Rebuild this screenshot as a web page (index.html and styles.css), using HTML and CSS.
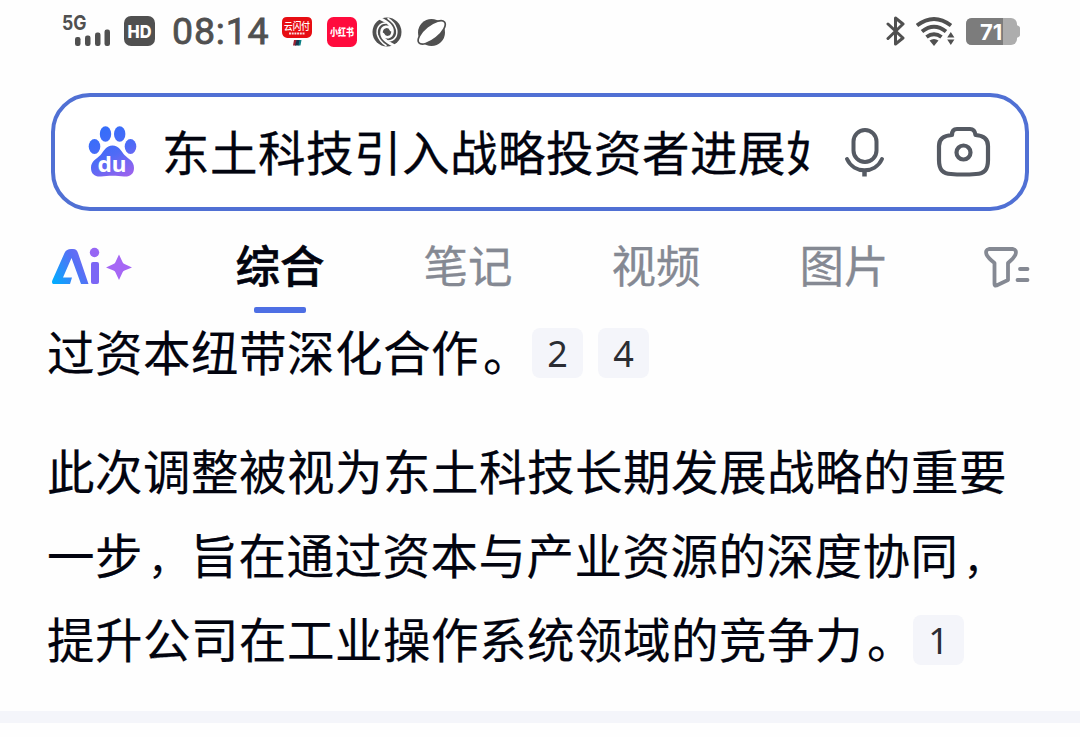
FILE: index.html
```html
<!DOCTYPE html>
<html lang="zh-CN">
<head>
<meta charset="utf-8">
<title>东土科技引入战略投资者进展</title>
<link rel="stylesheet" href="styles.css">
</head>
<body>
<header class="status">
  <div class="status-left">
    <svg class="signal" viewBox="62 12 50 40" width="50" height="40">
      <text x="62" y="30" class="five-g" textLength="24.500" lengthAdjust="spacingAndGlyphs">5G</text>
      <g fill="#505050"><rect x="75" y="37" width="5.5" height="9" rx="2.2"/><rect x="85" y="35.5" width="5.5" height="10.5" rx="2.2"/><rect x="95" y="32.5" width="5.5" height="13.5" rx="2.2"/><rect x="104.500" y="29.500" width="5.500" height="16.500" rx="2.200"/></g>
    </svg>
    <svg class="hd" viewBox="124 12 32 40" width="32" height="40">
      <rect x="124" y="16" width="31" height="30" rx="7" fill="#505050"/>
      <text x="127.500" y="37.500" class="hd-text" textLength="24" lengthAdjust="spacingAndGlyphs">HD</text>
    </svg>
    <time class="clock">08:14</time>
    <svg class="pay" viewBox="281 12 32 40" width="32" height="40">
      <path d="M287 17h20q5 0 5 5v10q0 5-5 6h-20q-5-1-5-6v-10q0-5 5-5z" fill="#e70d13"/>
      <text x="284" y="30" class="app-text pay-text" textLength="26" lengthAdjust="spacingAndGlyphs">云闪付</text>
      <path d="M289 33.500h16" stroke="#fff" stroke-width="2" stroke-dasharray="2 .7" opacity=".85"/>
      <path d="M294 40h3l-1 5.500h-3z" fill="#9d2434"/><path d="M296.500 40h4l-1.500 5.500h-4z" fill="#17354f"/><path d="M299.500 40h2l-1 5.500h-2z" fill="#0c8186"/>
    </svg>
    <svg class="red" viewBox="326 12 32 40" width="32" height="40">
      <rect x="327" y="17" width="30" height="30" rx="6.500" fill="#ff0b3d"/>
      <text x="330" y="35.500" class="app-text" textLength="24" lengthAdjust="spacingAndGlyphs">小红书</text>
    </svg>
    <svg class="swirl" viewBox="-15 -20 30 40" width="30" height="40">
      <defs>
        <g id="swirlArm" fill="none" stroke="#fefefe" stroke-linecap="round">
          <path d="M4-2C2-7-5-6-5.500 0C-6 6-1 10 7 13.500" stroke-width="2.600"/>
          <path d="M-1-9C-8-9-11-3-9.500 3C-8 8-5 11-1 13.500" stroke-width="1.500"/>
        </g>
      </defs>
      <circle r="14.500" fill="#505050"/>
      <use href="#swirlArm"/><use href="#swirlArm" transform="rotate(180)"/>
    </svg>
    <svg class="planet" viewBox="416 12 32 40" width="32" height="40">
      <circle cx="431.500" cy="32.500" r="13.500" fill="#505050"/>
      <ellipse cx="431.700" cy="32.300" rx="16.500" ry="7" transform="rotate(-39 431.700 32.300)" fill="#fff" stroke="#505050" stroke-width="1.700"/>
    </svg>
  </div>
  <div class="status-right">
    <svg viewBox="886 12 20 40" width="20" height="40"><path d="M888 24l15 14-7.500 6V18l7.500 6-15 14.500" fill="none" stroke="#505050" stroke-width="3" stroke-linejoin="round" stroke-linecap="round"/></svg>
    <svg class="wifi" viewBox="916 12 40 40" width="40" height="40">
      <g fill="none" stroke="#505050" stroke-width="3.900"><path d="M917 25.500Q934 12.500 951 25.500"/><path d="M922 31.500Q934 22 946 31.500"/><path d="M926.500 37Q934 31.500 941.500 37"/></g>
      <path d="M929.500 40.500Q934 37.500 938.500 40.500L934 46z" fill="#505050"/><path d="M950.800 32l3.600 5.500h-7.200zM950.800 45l3.600-5.500h-7.200z" fill="#505050"/>
    </svg>
    <svg class="battery" viewBox="966 12 54 40" width="54" height="40">
      <rect x="966" y="18" width="51" height="27" rx="6" fill="#adadad"/><path d="M1016 25q4 1 4 3v7q0 2-4 3z" fill="#adadad"/>
      <path d="M972 18h31v27h-31q-6 0-6-6V24q0-6 6-6z" fill="#7c7c7c"/>
      <text x="980" y="39.700" class="battery-text">71</text>
    </svg>
  </div>
</header>

<div class="search">
  <svg class="paw" viewBox="88 125 50 54" width="50" height="54">
    <defs><linearGradient id="pawFill" gradientUnits="userSpaceOnUse" x1="102" y1="130" x2="128" y2="178"><stop offset="0" stop-color="#356dfa"/><stop offset=".5" stop-color="#4f6bf6"/><stop offset="1" stop-color="#a162ed"/></linearGradient></defs>
    <g fill="url(#pawFill)"><ellipse cx="105.500" cy="134" rx="5.700" ry="7.800"/><ellipse cx="119.700" cy="134" rx="5.700" ry="7.800"/><ellipse cx="94.500" cy="146.500" rx="5.800" ry="7.500"/><ellipse cx="130.500" cy="146.500" rx="5.800" ry="7.500"/>
    <path d="M112.500 145.500C106 145.500 104 151 100.500 155C96 159.500 91 161 91 168C91 174 95 177 101 176.500C108 175.500 117 175.500 124 176.500C130 177 134 174 134 168C134 161 129 159.500 124.500 155C121 151 119 145.500 112.500 145.500Z"/></g>
    <text x="97.500" y="171.500" class="du" textLength="29" lengthAdjust="spacingAndGlyphs">du</text>
  </svg>
  <div class="query">东土科技引入战略投资者进展如</div>
  <svg class="mic" viewBox="844 125 42 54" width="42" height="54"><g fill="none" stroke="#555a63" stroke-width="4" stroke-linecap="round"><rect x="853.500" y="130" width="23" height="32" rx="11.500"/><path d="M847 159C854 174 875 174 882 159"/><path d="M864.500 170v6.500" stroke-linecap="butt" stroke-width="4.500"/></g></svg>
  <svg class="camera" viewBox="936 125 56 54" width="56" height="54"><g fill="none" stroke="#555a63" stroke-width="4.200" stroke-linejoin="round"><path d="M952 135C952 131 954 129 957 129H970C973 129 975 131 975.500 135C984 135.500 988 139 988 146V160C988 170 984 174 976 174C967 174.700 959 174.700 951 174C943 174 939 170 939 160V146C939 139 943 135.500 952 135Z"/><circle cx="963.500" cy="152.500" r="7"/></g></svg>
</div>

<nav class="tabs">
  <svg class="ai" viewBox="52 246 80 40" width="80" height="40">
    <defs><linearGradient id="aiFill" gradientUnits="userSpaceOnUse" x1="54" y1="284" x2="110" y2="250"><stop offset="0" stop-color="#00adff"/><stop offset=".45" stop-color="#576ff5"/><stop offset="1" stop-color="#a665f4"/></linearGradient></defs>
    <path d="M54 284C52 284 51.500 282 52.500 280L64.500 253C66 250 68 249 71 249H73C76 249 77 250.500 78 253L88.500 284H81L71.500 258L63 277.500H72L70 284Z" fill="url(#aiFill)"/>
    <rect x="91" y="262" width="8" height="22" rx="2" fill="#7b66f5"/><circle cx="94.500" cy="252.500" r="4.700" fill="#9666f4"/>
    <path d="M119 254.500L122.500 262Q123 263.500 124.500 264L132 267.500L124.500 270.500Q123 271 122.500 272.500L119 280L115.500 272.500Q115 271 113.500 270.500L106 267.500L113.500 264Q115 263.500 115.500 262Z" fill="#a667f5"/>
  </svg>
  <a class="tab active">综合</a>
  <a class="tab">笔记</a>
  <a class="tab">视频</a>
  <a class="tab">图片</a>
  <svg class="filter" viewBox="984 246 46 44" width="46" height="44"><g fill="none" stroke="#858993" stroke-width="3.800" stroke-linejoin="round" stroke-linecap="round"><path d="M989 249H1013Q1017 250 1015.500 254.500Q1014 258 1008 263V280L996.500 285.500Q994.500 286 994.500 284V263Q988 258 986.500 254.500Q985 250 989 249Z"/><path d="M1020 269h7.500M1017.500 280h10"/></g></svg>
</nav>

<main class="answer">
  <p class="first">过资本纽带深化合作<span class="mark stop">。</span><a class="cite">2</a><a class="cite">4</a></p>
  <p class="second">此次调整被视为东土科技长期发展战略的重要<br>一步<span class="mark comma">，</span>旨在通过资本与产业资源的深度协同<span class="mark comma">，</span><br>提升公司在工业操作系统领域的竞争力<span class="mark stop">。</span><a class="cite">1</a></p>
</main>
<div class="divider"></div>
</body>
</html>
```

FILE: styles.css
```css
* { box-sizing: border-box; }
body {
  margin: 0;
  width: 1080px;
  height: 737px;
  overflow: hidden;
  background: #fefefe;
  color: #02040f;
  font-family: "Noto Sans CJK SC", sans-serif;
}
svg { display: block; flex: none; }

.status {
  display: flex;
  justify-content: space-between;
  height: 93px;
  padding: 12px 60px 0 62px;
}
.status-left, .status-right { display: flex; height: 40px; }
.five-g { font: 700 20px Inter, sans-serif; fill: #505050; }
.hd { margin-left: 12px; }
.hd-text { font: 800 18px Inter, sans-serif; fill: #fff; }
.clock {
  width: 100px;
  margin-left: 16px;
  font: 400 37.5px/39px Roboto, sans-serif;
  letter-spacing: 0.8px;
  color: #505050;
  -webkit-text-stroke: 0.8px #505050;
}
.pay { margin-left: 9px; }
.app-text { font: 900 10px "Noto Sans CJK SC", sans-serif; fill: #fff; }
.pay-text { font-weight: 500; }
.red { margin-left: 13px; }
.swirl { margin-left: 14px; }
.planet { margin-left: 14px; }
.wifi { margin-left: 10px; }
.battery { margin-left: 10px; }
.battery-text { font: 700 22px Inter, sans-serif; fill: #fff; }

.search {
  display: flex;
  align-items: center;
  height: 118px;
  margin: 0 51px;
  padding: 0 33px;
  border: 4px solid #5070d4;
  border-radius: 39px;
  background: #fff;
}
.du { font: 700 22px "Noto Sans", sans-serif; fill: #fff; }
.query {
  width: 648px;
  margin: -3px 0 0 24px;
  overflow: hidden;
  white-space: nowrap;
  font-size: 47.5px;
  line-height: 70px;
  letter-spacing: 0.5px;
  -webkit-text-stroke: 0.3px #02040f;
}
.mic { margin-left: 34px; }
.camera { margin-left: 50px; }

.tabs {
  display: flex;
  align-items: flex-start;
  height: 102px;
  padding: 35px 50px 0 52px;
}
.tab {
  display: flex;
  flex-direction: column;
  align-items: center;
  width: 90px;
  margin: -15px 0 0 98px;
  font-size: 44.5px;
  line-height: 66px;
  color: #858993;
  -webkit-text-stroke: 0.3px #858993;
}
.active {
  margin-left: 103px;
  font-weight: 500;
  color: #02040f;
  -webkit-text-stroke: 0.6px #02040f;
}
.active::after {
  content: "";
  width: 52px;
  height: 6px;
  margin-top: 10px;
  border-radius: 2px;
  background: #4e6fe4;
}
.filter { margin-left: 95px; }

.answer { height: 398px; padding-left: 47px; }
.answer p {
  margin: 0;
  font-size: 47.5px;
  line-height: 84px;
  letter-spacing: 0.5px;
  white-space: nowrap;
  -webkit-text-stroke: 0.2px #02040f;
}
.answer .first { margin-top: -4px; }
.answer .second { margin-top: 35px; }
.mark { margin: 0 -4px 0 4px; }
.comma {
  margin: 0 2px 0 5px;
  font-size: 40px;
  line-height: 0;
}
.cite {
  display: inline-block;
  width: 51px;
  height: 50px;
  margin-right: 15px;
  border-radius: 8px;
  background: #f4f5fa;
  color: #2b2d33;
  font-family: "Noto Sans", sans-serif;
  font-size: 36px;
  line-height: 51px;
  letter-spacing: 0;
  text-align: center;
  vertical-align: 4px;
  -webkit-text-stroke: 0;
}
.stop + .cite { margin-left: 5px; }
.second .stop + .cite { margin-left: 2px; }
.divider { height: 12px; margin-top: 4px; background: #f4f5fa; }
```
